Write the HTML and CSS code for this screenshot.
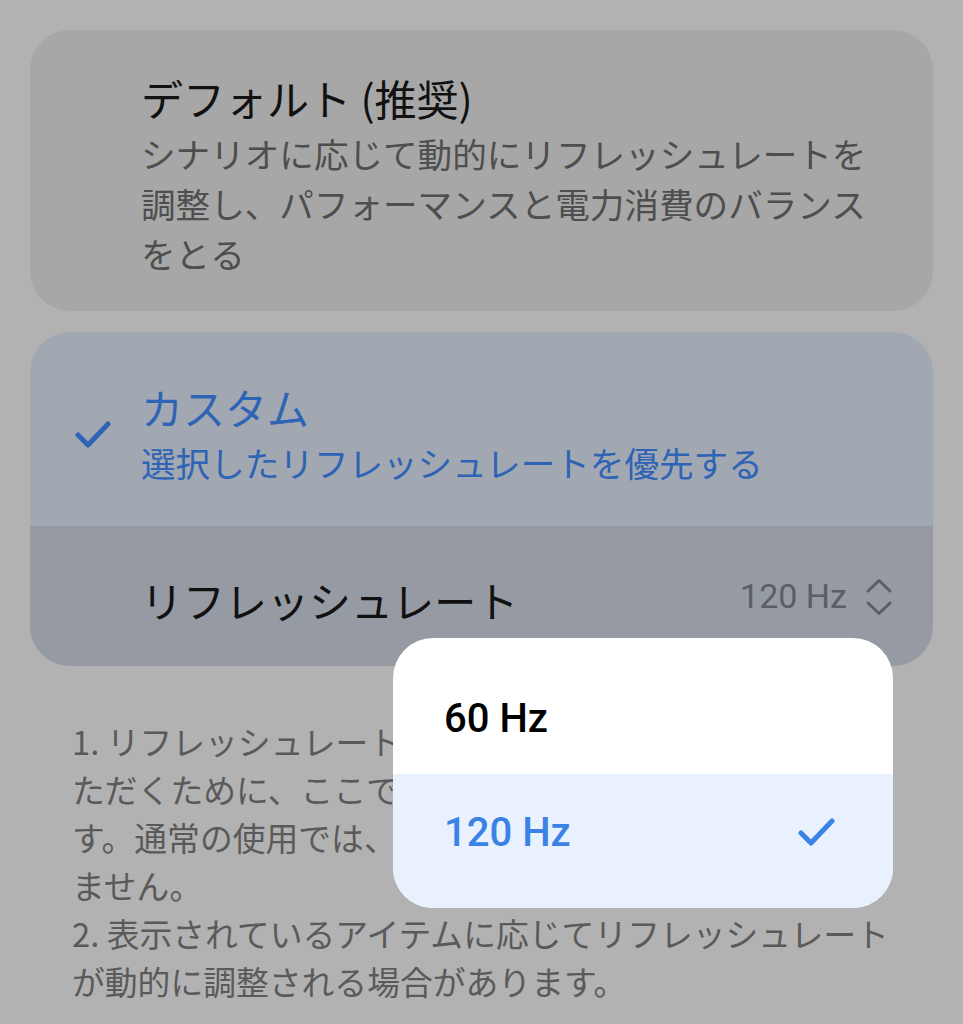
FILE: index.html
```html
<!DOCTYPE html>
<html lang="ja">
<head>
    <meta charset="UTF-8">
    <meta name="viewport" content="width=device-width, initial-scale=1.0">
    <title>リフレッシュレート</title>
    <link rel="stylesheet" href="styles.css">
</head>
<body>

    <div class="page">

        <div class="card">
            <div class="option">
                <div class="option-title">デフォルト (推奨)</div>
                <div class="option-desc">シナリオに応じて動的にリフレッシュレートを<br>調整し、パフォーマンスと電力消費のバランス<br>をとる</div>
            </div>
        </div>

        <div class="card card-selected">
            <div class="option option-checked">
                <svg class="check" width="36" height="30" viewBox="0 0 36 30">
                    <path d="M3 15 L13 25 L33 4" fill="none" stroke="currentColor" stroke-width="5" stroke-linecap="round" stroke-linejoin="round"/>
                </svg>
                <div>
                    <div class="option-title">カスタム</div>
                    <div class="option-desc">選択したリフレッシュレートを優先する</div>
                </div>
            </div>
            <div class="rate-row">
                <span class="rate-label">リフレッシュレート</span>
                <span class="rate-value">
                    120 Hz
                    <svg width="28" height="38" viewBox="0 0 28 38">
                        <path d="M3 13 L14 2.5 L25 13 M3 25 L14 35.5 L25 25" fill="none" stroke="currentColor" stroke-width="3" stroke-linecap="round" stroke-linejoin="round"/>
                    </svg>
                </span>
            </div>
        </div>

        <div class="notes">
            1. リフレッシュレートの切り替えを体験してい<br>
            ただくために、ここで設定を変更できるようにしていま<br>
            す。通常の使用では、この設定を変更する必要はあり<br>
            ません。<br>
            2. 表示されているアイテムに応じてリフレッシュレート<br>
            が動的に調整される場合があります。
        </div>

        <!-- dropdown menu opened from the rate row -->
        <div class="menu">
            <div class="menu-item menu-item-first">60 Hz</div>
            <div class="menu-item menu-item-active">
                120 Hz
                <svg width="38" height="32" viewBox="0 0 38 32">
                    <path d="M3 17 L13 27 L34 5" fill="none" stroke="currentColor" stroke-width="5" stroke-linecap="round" stroke-linejoin="round"/>
                </svg>
            </div>
        </div>

    </div>

</body>
</html>
```

FILE: styles.css
```css
body {
    margin: 0;
    background-color: #b2b2b2;
    font-family: 'Noto Sans CJK JP', 'Noto Sans', sans-serif;
}

.page {
    position: relative;
    padding: 30px 30px 0 30px;
    height: 994px;
    overflow: hidden;
}

.card {
    background-color: #a7a7a7;
    border-radius: 40px;
    overflow: hidden;
    margin-bottom: 21px;
}

.option {
    padding: 42px 30px 33px 111px;
}

.option-title {
    font-size: 42px;
    line-height: 52px;
    color: #111;
    margin-bottom: 4px;
}

.option-desc {
    font-size: 34.6px;
    line-height: 50px;
    color: #4e4e4e;
    white-space: nowrap;
}

.card-selected {
    background-color: #a1a8b2;
}

.option-checked {
    display: flex;
    align-items: center;
    gap: 30px;
    padding: 49px 30px 39px 45px;
    color: #2e63b5;
}

.option-checked .option-title,
.option-checked .option-desc {
    color: #2e63b5;
}

.check {
    flex-shrink: 0;
    margin-top: 2px;
}

.rate-row {
    display: flex;
    align-items: center;
    justify-content: space-between;
    height: 140px;
    padding: 0 40px 0 111px;
    background-color: #969aa3;
}

.rate-label {
    font-size: 42px;
    color: #111;
    margin-top: 6px;
}

.rate-value {
    display: flex;
    align-items: center;
    gap: 18px;
    font-family: 'Roboto', sans-serif;
    font-size: 34px;
    color: #5a5e66;
}

.rate-value svg {
    margin-top: 2px;
}

.notes {
    margin-top: 51px;
    padding-left: 42px;
    font-size: 32.8px;
    line-height: 48px;
    color: #5a5a5a;
    white-space: nowrap;
}

/* popup list */
.menu {
    position: absolute;
    left: 393px;
    top: 638px;
    width: 500px;
    border-radius: 40px;
    overflow: hidden;
    background-color: #fff;
}

.menu-item {
    display: flex;
    align-items: center;
    justify-content: space-between;
    height: 135px;
    padding: 0 57px 0 51px;
    box-sizing: border-box;
    font-family: 'Roboto', sans-serif;
    font-size: 40px;
    font-weight: 500;
    color: #000;
}

.menu-item-first {
    height: 136px;
    padding-top: 24px;
}

.menu-item-active {
    height: 134px;
    padding-bottom: 18px;
    background-color: #e8f1fd;
    color: #3b82e6;
}
```
